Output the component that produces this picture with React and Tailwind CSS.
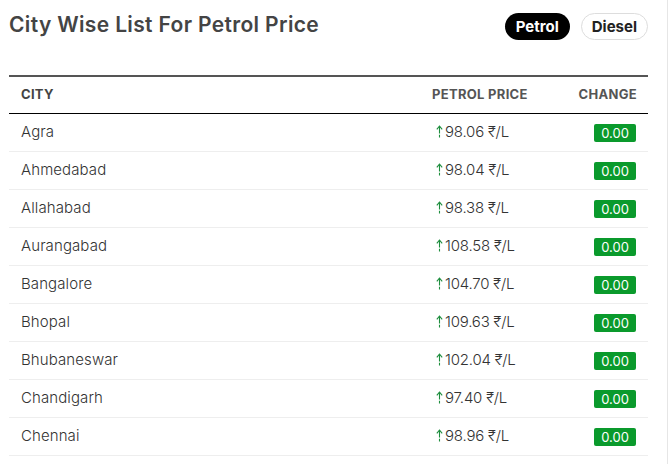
import React from "react";

const rows = [
  ["Agra", "98.06"],
  ["Ahmedabad", "98.04"],
  ["Allahabad", "98.38"],
  ["Aurangabad", "108.58"],
  ["Bangalore", "104.70"],
  ["Bhopal", "109.63"],
  ["Bhubaneswar", "102.04"],
  ["Chandigarh", "97.40"],
  ["Chennai", "98.96"],
];

function UpArrow() {
  return (
    <svg width="7" height="13" viewBox="0 0 7 13" className="inline-block mr-[2px] align-[-1px]">
      <path d="M3.5 1.5 V12.5" stroke="#1e8e3e" strokeWidth="1.1" strokeDasharray="7 1.2 4" fill="none" />
      <path d="M0.8 4.3 L3.5 1.2 L6.2 4.3" stroke="#1e8e3e" strokeWidth="1.1" fill="none" />
    </svg>
  );
}

export default function App() {
  return (
    <div
      className="w-[671px] h-[464px] bg-white overflow-hidden flex"
      style={{ fontFamily: "Inter, 'Open Sans', sans-serif" }}
    >
      <div className="w-[668px] border-r border-[#e6e6e6] pl-[9px] pr-[19px]">
        <div className="flex items-start justify-between h-[75px]">
          <h1 className="mt-[9px] text-[21px] font-semibold text-[#444] tracking-[0.35px]">
            City Wise List For Petrol Price
          </h1>
          <div className="flex gap-[11px] mt-[13px]">
            <button className="h-[27px] px-[11px] rounded-full bg-black text-white text-[15px] font-bold leading-none">
              Petrol
            </button>
            <button className="h-[27px] px-[10px] rounded-full bg-white border border-[#ddd] text-[#222] text-[15px] font-bold leading-none">
              Diesel
            </button>
          </div>
        </div>
        <table className="w-full border-collapse">
          <thead>
            <tr className="border-t-2 border-[#555] border-b border-b-black h-[37px]">
              <th className="text-left pl-[12px] text-[13px] font-bold text-[#444] tracking-[0.3px]">CITY</th>
              <th className="text-left w-[148px] pl-[12px] text-[13px] font-bold text-[#555] tracking-[0.3px]">PETROL PRICE</th>
              <th className="text-right pr-[11px] w-[80px] text-[13px] font-bold text-[#555] tracking-[0.3px]">CHANGE</th>
            </tr>
          </thead>
          <tbody>
            {rows.map(([city, price]) => (
              <tr key={city} className="border-b border-[#eee] h-[38px]">
                <td className="pl-[12px] text-[15px] font-light text-[#333] tracking-[0.1px]">{city}</td>
                <td className="pl-[16px] text-[15px] font-light text-[#333] tracking-[-0.2px]">
                  <UpArrow />
                  {price} ₹/L
                </td>
                <td className="text-right pr-[12px]">
                  <span className="inline-block w-[42px] text-center bg-[#0a9a2c] text-white text-[13px] leading-[18px] rounded-[2px]">
                    0.00
                  </span>
                </td>
              </tr>
            ))}
          </tbody>
        </table>
      </div>
    </div>
  );
}
